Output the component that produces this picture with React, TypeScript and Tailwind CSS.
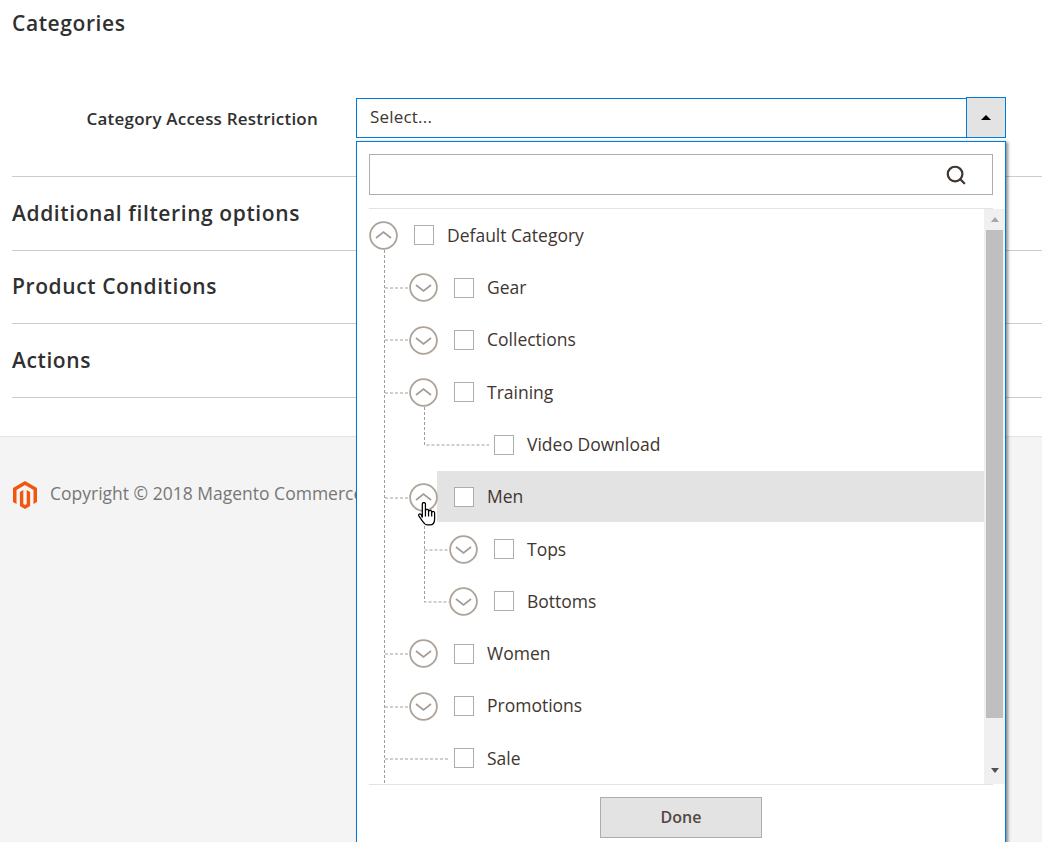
import { Search } from "lucide-react";

type Node = { label: string; level: number; toggle?: "open" | "closed"; active?: boolean };

const nodes: Node[] = [
  { label: "Default Category", level: 0, toggle: "open" },
  { label: "Gear", level: 1, toggle: "closed" },
  { label: "Collections", level: 1, toggle: "closed" },
  { label: "Training", level: 1, toggle: "open" },
  { label: "Video Download", level: 2 },
  { label: "Men", level: 1, toggle: "open", active: true },
  { label: "Tops", level: 2, toggle: "closed" },
  { label: "Bottoms", level: 2, toggle: "closed" },
  { label: "Women", level: 1, toggle: "closed" },
  { label: "Promotions", level: 1, toggle: "closed" },
  { label: "Sale", level: 1 },
];

function Toggle({ open }: { open: boolean }) {
  return (
    <svg width="29" height="29" viewBox="0 0 29 29" fill="none" className="shrink-0">
      <circle cx="14.5" cy="14.5" r="13.4" stroke="#ada399" strokeWidth="1.8" fill="#fff" />
      <path
        d={open ? "M7 17l7.5-6 7.5 6" : "M7 12l7.5 6 7.5-6"}
        stroke="#a39c96"
        strokeWidth="1.7"
      />
    </svg>
  );
}

function Row({ node }: { node: Node }) {
  const indent = ["pl-0", "pl-[40px]", "pl-[80px]"][node.level];
  return (
    <div className={`flex h-[52.3px] items-center ${indent}`}>
      <div className="relative z-10 w-[29px] shrink-0">{node.toggle && <Toggle open={node.toggle === "open"} />}</div>
      <div
        className={`-ml-px flex h-[51px] flex-1 items-center self-start pl-[17px] pt-px ${node.active ? "bg-[#e3e3e3]" : ""}`}
      >
        <span className="relative z-10 h-5 w-5 shrink-0 border border-[#adadad] bg-white" />
        <span className="ml-[13px] pb-px text-[17.5px] text-[#41362f]">{node.label}</span>
      </div>
    </div>
  );
}

// dashed connectors, coordinates relative to the top left of the tree
function Connectors() {
  const lines = [
    "M15.5 41V575",
    "M16 79H41",
    "M16 131H41",
    "M16 184H41",
    "M16 289H41",
    "M16 445H41",
    "M16 498H41",
    "M16 550H81",
    "M55.5 198V236H120",
    "M55.5 302V393H80",
    "M55.5 341H80",
  ];
  return (
    <svg className="absolute left-0 top-0 h-[575px] w-[200px]" fill="none">
      {lines.map((d) => (
        <path key={d} d={d} stroke="#a79d95" strokeDasharray="3 2" />
      ))}
    </svg>
  );
}

function Magento() {
  return (
    <svg width="24" height="28" viewBox="0 0 24 28" fill="#f1560f" className="shrink-0">
      <path d="M12 0 0 7v14l3.5 2V9L12 4l8.5 5v14l3.5-2V7z" />
      <path d="M12 28l-5.1-3V11l3.4-2v14l1.7 1 1.7-1V9l3.4 2v14z" />
    </svg>
  );
}

function Hand() {
  return (
    <svg
      width="18"
      height="25"
      viewBox="0 0 17 24"
      fill="#fff"
      stroke="#000"
      strokeWidth="1.2"
      className="absolute left-[49px] top-[293px] z-20"
    >
      <path d="M4 15V2a1.5 1.5 0 0 1 3 0v6.5a1.5 1.5 0 0 1 3 0v1a1.5 1.5 0 0 1 3 0v1a1.4 1.4 0 0 1 2.8 0v6c0 3-1.5 5.5-4.5 5.5h-2c-2.5 0-3.5-1-5-3.5l-3.5-5c-1-1.5.8-2.8 2-1.6z" />
      <path d="M7 8v6M10 9v5M13 10v4" fill="none" />
    </svg>
  );
}

function Section({ title }: { title: string }) {
  return (
    <div className="flex h-[73.6px] items-center border-b border-[#cccccc]">
      <h2 className="text-[21px] font-semibold tracking-[0.6px] text-[#303030]">{title}</h2>
    </div>
  );
}

function Dropdown() {
  return (
    <div className="absolute left-0 top-[44px] h-[720px] w-[650px] border border-[#007bdb] bg-white pl-3 pt-3 shadow-[2px_1px_3px_rgba(0,0,0,0.45)]">
      <div className="flex h-[41px] w-[624px] items-center justify-end border border-[#adadad] pr-[25px]">
        <Search size={22} strokeWidth={2.4} className="text-[#41362f]" />
      </div>
      <div className="relative mt-[13px] h-[577px] w-[624px] border-y border-[#e3e3e3]">
        <Connectors />
        <div className="w-[615px] pt-[0.4px]">
          {nodes.map((n) => (
            <Row key={n.label} node={n} />
          ))}
        </div>
        <div className="absolute right-[-12px] top-0 flex h-[575px] w-[21px] flex-col items-center bg-[#f0f0f0]">
          <div className="mt-[8px] h-0 w-0 border-x-[4px] border-b-[5px] border-x-transparent border-b-[#a6a6a6]" />
          <div className="mt-[8px] h-[488px] w-[17px] bg-[#bfbfbf]" />
          <div className="mt-[50px] h-0 w-0 border-x-[4px] border-t-[5px] border-x-transparent border-t-[#505050]" />
        </div>
        <Hand />
      </div>
      <button className="ml-[231px] mt-[12px] h-[41px] w-[162px] border border-[#adadad] bg-[#e3e3e3] pb-0.5 text-[16px] font-semibold text-[#514943]">
        Done
      </button>
    </div>
  );
}

export default function App() {
  return (
    <div className="flex h-[842px] flex-col overflow-hidden bg-white font-['Open_Sans',sans-serif]">
      <div className="h-[436px] shrink-0 pl-3">
        <div className="h-[177px] border-b border-[#cccccc]">
          <h2 className="pt-[9px] text-[21px] font-semibold leading-[28px] tracking-[0.6px] text-[#303030]">
            Categories
          </h2>
          <div className="mt-[60px] flex items-start">
            <label className="w-[306px] pt-[9px] text-right text-[17px] font-semibold tracking-[0.22px] text-[#303030]">
              Category Access Restriction
            </label>
            <div className="relative ml-[38px] flex h-[41px] w-[650px] items-end">
              <div className="flex h-[40px] flex-1 items-center border border-[#007bdb] pb-0.5 pl-[13px] text-[17px] tracking-[0.2px] text-[#41362f]">
                Select...
              </div>
              <div className="-ml-px flex h-[41px] w-[40px] items-center justify-center border border-[#007bdb] bg-[#e3e3e3]">
                <div className="h-0 w-0 border-x-[5px] border-b-[5px] border-x-transparent border-b-black" />
              </div>
              <Dropdown />
            </div>
          </div>
        </div>
        <Section title="Additional filtering options" />
        <Section title="Product Conditions" />
        <Section title="Actions" />
      </div>
      <div className="flex-1 border-t border-[#e3e3e3] bg-[#f4f4f4] pl-[13px] pt-[43px]">
        <div className="flex items-center gap-[13px]">
          <Magento />
          <span className="whitespace-nowrap pb-1 text-[17.5px] text-[#777777]">
            Copyright © 2018 Magento Commerce Inc. All rights reserved.
          </span>
        </div>
      </div>
    </div>
  );
}
